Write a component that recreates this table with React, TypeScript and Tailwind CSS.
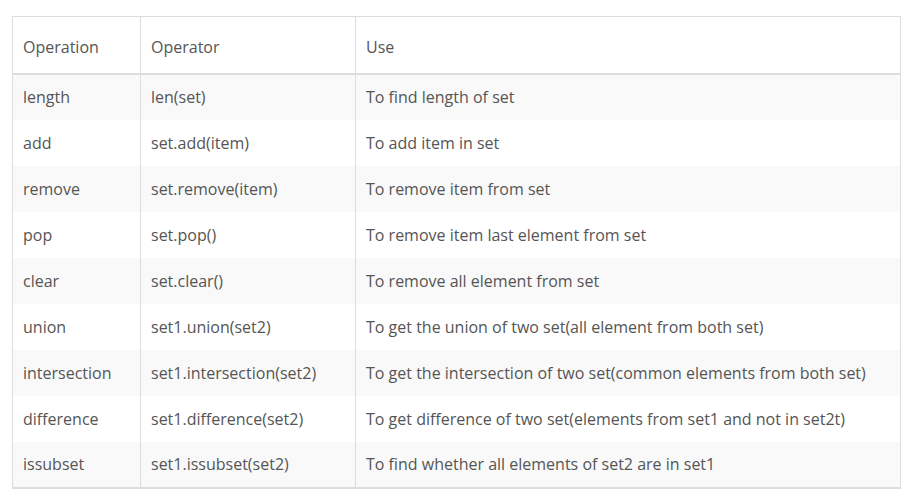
const rows: [string, string, string][] = [
  ['length', 'len(set)', 'To find length of set'],
  ['add', 'set.add(item)', 'To add item in set'],
  ['remove', 'set.remove(item)', 'To remove item from set'],
  ['pop', 'set.pop()', 'To remove item last element from set'],
  ['clear', 'set.clear()', 'To remove all element from set'],
  ['union', 'set1.union(set2)', 'To get the union of two set(all element from both set)'],
  ['intersection', 'set1.intersection(set2)', 'To get the intersection of two set(common elements from both set)'],
  ['difference', 'set1.difference(set2)', 'To get difference of two set(elements from set1 and not in set2t)'],
  ['issubset', 'set1.issubset(set2)', 'To find whether all elements of set2 are in set1'],
];

export default function App() {
  return (
    <div className="min-h-[500px] bg-white pt-[16px] pl-[12px] font-['Open_Sans',sans-serif] text-[16px] text-[#555]">
      <table className="w-[889px] table-fixed border-collapse border border-b-2 border-[#ddd]">
        <colgroup>
          <col className="w-[128px]" />
          <col className="w-[215px]" />
          <col />
        </colgroup>
        <thead>
          <tr className="h-[57px] border-b-2 border-[#ddd]">
            <th className="border-r border-[#ddd] px-[10px] pt-[4px] text-left align-middle font-normal">Operation</th>
            <th className="border-r border-[#ddd] px-[10px] pt-[4px] text-left align-middle font-normal">Operator</th>
            <th className="px-[10px] pt-[4px] text-left align-middle font-normal">Use</th>
          </tr>
        </thead>
        <tbody>
          {rows.map(([op, fn, use], i) => (
            <tr key={op} className={`h-[46px] ${i % 2 === 0 ? 'bg-[#f9f9f9]' : 'bg-white'}`}>
              <td className="border-r border-[#ddd] px-[10px] align-middle">{op}</td>
              <td className="border-r border-[#ddd] px-[10px] align-middle">{fn}</td>
              <td className="px-[10px] align-middle">{use}</td>
            </tr>
          ))}
        </tbody>
      </table>
    </div>
  );
}
